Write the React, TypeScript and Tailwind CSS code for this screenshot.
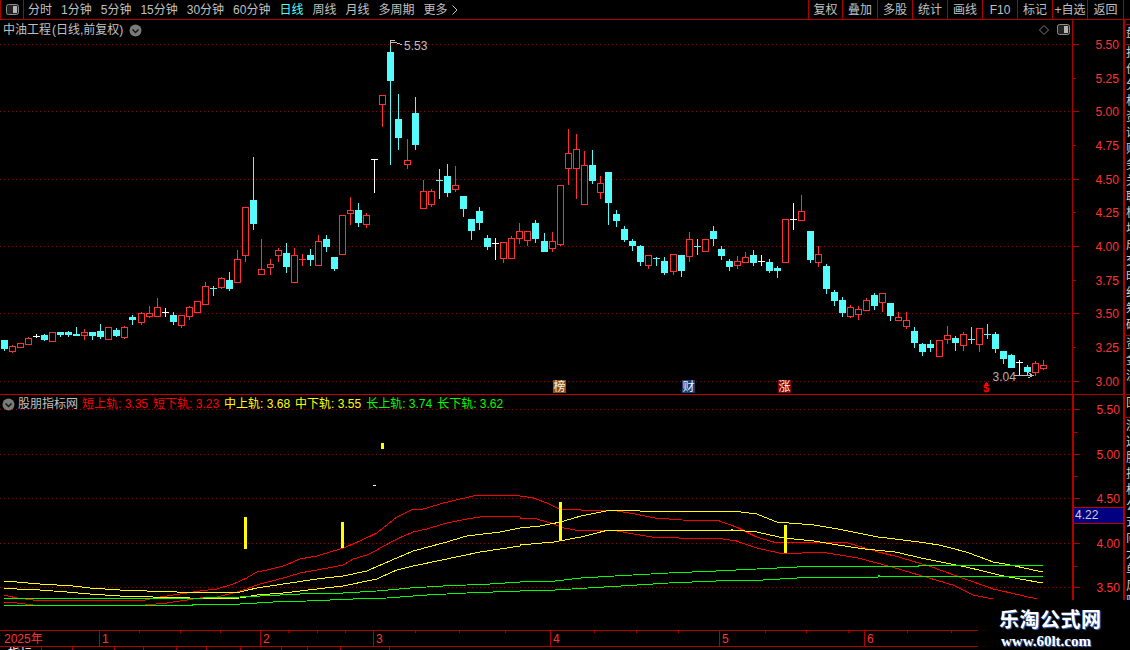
import React from "react";

// [x, high, bodyTop, bodyBottom, low, kind] read off the chart, in 3x crop units
type Row = [number, number, number, number, number, "r" | "c" | "w"];
type Bar = { x: number; hi: number; top: number; bot: number; lo: number; kind: "r" | "c" | "w" };

const CANDLE_RED = "#ff3232";
const CANDLE_CYAN = "#54fcfc";
const GRID_RED = "#8f0000";

const toBars = (ox: number, oy: number, rows: Row[]): Bar[] =>
  rows.map(([x, hi, top, bot, lo, kind]) => ({
    x: Math.floor(ox + x / 3),
    hi: Math.round(oy + hi / 3),
    top: Math.round(oy + top / 3),
    bot: Math.round(oy + bot / 3),
    lo: Math.round(oy + lo / 3),
    kind,
  }));

const bars: Bar[] = [
  ...toBars(0, 140, [
    [13, 600, 600, 624, 630, "c"], [37, 615, 619, 632, 636, "r"], [61, 610, 610, 620, 620, "r"],
    [85, 592, 595, 613, 613, "r"], [109, 582, 588, 588, 590, "w"], [133, 583, 585, 597, 600, "c"],
    [157, 577, 577, 602, 602, "r"], [181, 576, 576, 582, 588, "c"], [205, 573, 576, 582, 588, "c"],
    [229, 560, 582, 584, 585, "c"], [253, 567, 577, 584, 597, "r"], [277, 576, 576, 585, 597, "c"],
    [301, 552, 573, 588, 594, "c"], [325, 562, 562, 596, 596, "r"], [349, 564, 570, 585, 588, "c"],
    [373, 558, 562, 590, 594, "r"], [397, 525, 531, 537, 552, "c"], [424, 516, 520, 545, 552, "r"],
    [448, 498, 520, 527, 531, "r"], [472, 474, 502, 527, 527, "r"], [496, 504, 516, 516, 528, "w"],
    [520, 516, 525, 543, 552, "c"], [544, 526, 526, 554, 561, "r"], [568, 498, 502, 527, 537, "r"],
    [592, 484, 484, 515, 515, "r"], [616, 426, 439, 491, 491, "r"], [640, 438, 444, 444, 465, "c"],
    [664, 411, 415, 441, 444, "r"], [688, 396, 420, 444, 450, "c"], [712, 330, 358, 425, 425, "r"],
    [736, 202, 202, 344, 363, "r"], [760, 51, 180, 249, 267, "c"], [784, 297, 388, 401, 401, "r"],
    [811, 357, 373, 380, 402, "r"], [835, 325, 331, 344, 363, "r"],
  ]),
  ...toBars(280, 30, [
    [19, 639, 669, 708, 726, "c"], [43, 654, 676, 755, 755, "r"], [67, 672, 687, 687, 705, "r"],
    [91, 657, 675, 687, 705, "c"], [115, 615, 634, 704, 704, "r"], [139, 615, 627, 648, 663, "c"],
    [163, 681, 681, 714, 720, "c"], [187, 556, 556, 671, 671, "r"], [211, 501, 541, 548, 582, "r"],
    [235, 519, 540, 576, 588, "c"], [259, 549, 556, 581, 591, "r"], [283, 388, 388, 388, 486, "w"],
    [307, 196, 196, 221, 288, "r"], [331, 36, 66, 150, 402, "c"], [355, 192, 267, 321, 357, "c"],
    [382, 327, 391, 401, 414, "r"], [406, 201, 249, 342, 357, "c"], [430, 450, 484, 533, 533, "r"],
    [454, 477, 484, 521, 528, "r"], [478, 417, 451, 451, 504, "c"], [502, 402, 438, 486, 498, "c"],
    [526, 408, 466, 476, 483, "r"], [550, 498, 498, 534, 558, "c"], [574, 567, 567, 600, 627, "c"],
    [598, 531, 543, 576, 597, "c"], [622, 615, 624, 648, 657, "c"], [646, 624, 640, 640, 687, "w"],
    [670, 637, 637, 683, 696, "r"], [694, 618, 625, 683, 683, "r"], [718, 579, 604, 623, 639, "r"],
    [742, 604, 604, 629, 645, "r"], [766, 570, 579, 624, 636, "c"], [793, 609, 633, 663, 663, "c"],
    [817, 606, 634, 653, 663, "r"],
  ]),
  ...toBars(540, 120, [
    [61, 196, 196, 371, 375, "r"], [85, 27, 100, 143, 192, "r"], [109, 42, 88, 143, 234, "r"],
    [133, 93, 136, 251, 251, "r"], [157, 90, 135, 180, 189, "c"], [181, 168, 190, 215, 234, "r"],
    [205, 156, 156, 246, 312, "c"], [229, 270, 282, 300, 318, "c"], [253, 318, 327, 357, 363, "c"],
    [277, 357, 363, 375, 390, "c"], [301, 375, 378, 423, 435, "c"], [325, 406, 406, 434, 444, "r"],
    [349, 411, 414, 414, 435, "c"], [373, 411, 423, 456, 462, "c"], [400, 403, 403, 452, 462, "r"],
    [424, 405, 405, 450, 468, "c"], [448, 336, 358, 407, 423, "r"], [472, 357, 379, 379, 402, "c"],
    [496, 358, 358, 392, 392, "r"], [520, 318, 333, 354, 375, "c"], [544, 378, 387, 405, 417, "c"],
    [568, 417, 423, 438, 450, "c"], [592, 408, 424, 434, 444, "r"], [616, 396, 412, 425, 425, "r"],
    [640, 390, 405, 426, 435, "c"], [664, 405, 423, 423, 435, "w"], [688, 417, 426, 450, 456, "c"],
    [712, 438, 445, 450, 471, "c"], [736, 298, 298, 425, 425, "r"], [760, 249, 298, 298, 327, "w"],
    [784, 225, 274, 299, 299, "r"], [811, 333, 333, 417, 426, "c"], [835, 378, 403, 425, 438, "r"],
  ]),
  ...toBars(770, 190, [
    [169, 222, 228, 294, 309, "c"], [193, 300, 306, 330, 345, "c"], [217, 321, 330, 366, 378, "c"],
    [241, 345, 352, 378, 381, "r"], [265, 348, 358, 372, 387, "r"], [289, 324, 331, 359, 359, "r"],
    [313, 309, 315, 345, 357, "c"], [337, 310, 310, 335, 363, "r"], [361, 339, 339, 375, 390, "c"],
    [385, 366, 382, 389, 389, "r"], [409, 366, 391, 407, 414, "r"], [433, 411, 423, 456, 471, "c"],
    [457, 459, 462, 483, 495, "c"], [481, 450, 462, 471, 483, "c"], [508, 451, 451, 497, 497, "r"],
    [532, 408, 436, 446, 459, "r"], [556, 438, 444, 456, 480, "c"], [580, 426, 433, 464, 480, "r"],
    [604, 411, 447, 447, 459, "c"], [628, 415, 415, 461, 483, "r"], [652, 402, 433, 433, 444, "c"],
    [676, 426, 432, 474, 486, "c"], [700, 483, 483, 504, 519, "c"], [724, 492, 495, 531, 531, "c"],
    [748, 510, 516, 516, 552, "w"], [772, 525, 531, 543, 552, "c"], [796, 513, 520, 545, 555, "r"],
    [820, 510, 526, 533, 537, "r"],
  ]),
];

// band lines: left half from a crop at 3x from x=0, right half from a crop from x=520
const band = (left: number[][], right: number[][]) =>
  [
    ...left.map(([x, y]) => [x / 3, 490 + y / 3]),
    ...right.map(([x, y]) => [520 + x / 2.958, 490 + y / 3]),
  ]
    .map(([x, y]) => `${x.toFixed(1)},${Math.round(y)}`)
    .join(" ");

const lines = [
  {
    color: "#ff0000",
    points: band(
      [[12, 316], [50, 323], [100, 331], [410, 331], [435, 329], [480, 320], [540, 313], [600, 303], [650, 296], [700, 282], [740, 265], [770, 245], [800, 239], [850, 228], [900, 207], [950, 198], [1000, 184], [1030, 175], [1080, 153], [1130, 130], [1190, 80], [1240, 56], [1270, 58], [1330, 40], [1420, 17], [1540, 15]],
      [[0, 19], [40, 23], [80, 38], [120, 60], [160, 58], [200, 62], [270, 60], [340, 73], [400, 85], [480, 90], [590, 93], [640, 110], [700, 140], [760, 160], [820, 155], [900, 155], [970, 160], [1060, 185], [1120, 200], [1210, 228], [1300, 260], [1400, 298], [1530, 328]]
    ),
  },
  {
    color: "#ff0000",
    points: band(
      [[12, 335], [50, 340], [100, 344], [360, 346], [370, 349], [435, 344], [500, 338], [600, 325], [650, 320], [700, 308], [740, 298], [770, 285], [850, 265], [900, 250], [1000, 232], [1030, 225], [1060, 208], [1100, 195], [1130, 180], [1190, 148], [1240, 125], [1280, 118], [1340, 100], [1400, 87], [1460, 79], [1560, 82]],
      [[0, 84], [50, 86], [100, 102], [130, 113], [180, 122], [270, 120], [320, 130], [390, 140], [470, 145], [580, 145], [640, 153], [700, 175], [780, 192], [890, 187], [1000, 205], [1100, 232], [1190, 258], [1280, 285], [1340, 315], [1400, 327]]
    ),
  },
  {
    color: "#ffff00",
    points: band(
      [[12, 274], [50, 277], [120, 283], [220, 288], [270, 295], [360, 301], [440, 304], [530, 307], [650, 307], [720, 305], [770, 293], [850, 283], [950, 268], [1030, 258], [1100, 242], [1190, 203], [1240, 182], [1340, 155], [1400, 138], [1500, 125], [1560, 115]],
      [[0, 115], [60, 108], [120, 95], [180, 78], [270, 60], [340, 60], [355, 64], [630, 64], [700, 72], [760, 95], [870, 105], [940, 118], [1060, 140], [1180, 155], [1240, 165], [1320, 185], [1400, 215], [1450, 225], [1546, 245]]
    ),
  },
  {
    color: "#ffff00",
    points: band(
      [[12, 295], [50, 298], [120, 301], [200, 307], [270, 313], [360, 319], [460, 322], [530, 322], [610, 328], [720, 323], [770, 314], [850, 308], [950, 298], [1030, 289], [1130, 268], [1190, 240], [1240, 228], [1340, 207], [1440, 185], [1560, 167]],
      [[0, 166], [100, 155], [180, 140], [250, 123], [630, 121], [700, 127], [780, 145], [870, 152], [940, 165], [1020, 177], [1110, 185], [1200, 207], [1320, 230], [1430, 258], [1546, 280]]
    ),
  },
  {
    color: "#00ff00",
    points: band(
      [[12, 325], [610, 325], [720, 320], [900, 313], [1030, 308], [1130, 302], [1230, 293], [1330, 288], [1470, 282], [1560, 277]],
      [[0, 277], [105, 274], [180, 265], [280, 257], [440, 250], [580, 244], [700, 238], [820, 232], [900, 229], [1180, 229], [1180, 226], [1546, 226]]
    ),
  },
  {
    color: "#00ff00",
    points: band(
      [[12, 346], [578, 346], [580, 343], [720, 342], [820, 337], [920, 334], [1060, 328], [1160, 323], [1280, 316], [1400, 310], [1560, 304]],
      [[0, 304], [105, 300], [200, 293], [300, 287], [440, 280], [580, 274], [720, 271], [820, 265], [1060, 262], [1060, 259], [1546, 261]]
    ),
  },
];

const leftMenu = [
  { label: "分时" },
  { label: "1分钟" },
  { label: "5分钟" },
  { label: "15分钟" },
  { label: "30分钟" },
  { label: "60分钟" },
  { label: "日线", active: true },
  { label: "周线" },
  { label: "月线" },
  { label: "多周期" },
  { label: "更多" },
];

const rightMenu = ["复权", "叠加", "多股", "统计", "画线", "F10", "标记", "+自选"];

const legend = [
  { label: "短上轨: 3.35", color: "text-[#ff0000]" },
  { label: "短下轨: 3.23", color: "text-[#ff0000]" },
  { label: "中上轨: 3.68", color: "text-[#ffff00]" },
  { label: "中下轨: 3.55", color: "text-[#ffff00]" },
  { label: "长上轨: 3.74", color: "text-[#00ff00]" },
  { label: "长下轨: 3.62", color: "text-[#00ff00]" },
];

const months = [
  { label: "2025年", width: "w-[99px]", first: true },
  { label: "1", width: "w-[161px]" },
  { label: "2", width: "w-[113px]" },
  { label: "3", width: "w-[177px]" },
  { label: "4", width: "w-[169px]" },
  { label: "5", width: "w-[145px]" },
  { label: "6", width: "flex-1" },
];

const monthTicks = [139, 180, 220, 288, 317, 345, 415, 459, 505, 594, 636, 678, 765, 806, 848, 907, 951];

const PanelIcon = () => (
  <svg width="13" height="11" viewBox="0 0 13 11" className="block">
    <rect x="0.5" y="0.5" width="12" height="10" rx="2" fill="#222" stroke="#8c8c8c" />
    <rect x="7" y="2" width="4" height="7" fill="#b4b4b4" />
  </svg>
);

const ChevronBadge = () => (
  <svg width="13" height="13" viewBox="0 0 13 13" className="block shrink-0">
    <circle cx="6.5" cy="6.5" r="6" fill="#7a7a7a" />
    <path d="M3.5 5.5 L6.5 8.5 L9.5 5.5" fill="none" stroke="#141414" strokeWidth="1.5" />
  </svg>
);

const Candle = ({ bar }: { bar: Bar }) => {
  const cx = bar.x + 0.5;
  const color = bar.kind === "r" ? CANDLE_RED : bar.kind === "c" ? CANDLE_CYAN : "#ffffff";
  const wick = <line x1={cx} x2={cx} y1={bar.hi} y2={bar.lo + 1} stroke={color} />;
  if (bar.top === bar.bot) {
    return (
      <g>
        {wick}
        <line x1={bar.x - 3} x2={bar.x + 4} y1={bar.top + 0.5} y2={bar.top + 0.5} stroke={color} />
      </g>
    );
  }
  if (bar.kind === "r") {
    return (
      <g>
        {wick}
        <rect x={bar.x - 2.5} y={bar.top + 0.5} width={6} height={bar.bot - bar.top} fill="#000" stroke={color} />
      </g>
    );
  }
  return (
    <g>
      {wick}
      <rect x={bar.x - 3} y={bar.top} width={7} height={bar.bot - bar.top + 1} fill={color} />
    </g>
  );
};

const GridLine = ({ y }: { y: number }) => (
  <line x1="0" x2="1072" y1={y + 0.5} y2={y + 0.5} stroke={GRID_RED} strokeDasharray="1 3" />
);

const Tag = ({ x, text, bg }: { x: number; text: string; bg: string }) => (
  <g>
    <rect x={x} y="380" width="13" height="13" fill={bg} />
    <text x={x + 0.5} y="391" fontSize="12" fill="#f4f4f4">
      {text}
    </text>
  </g>
);

const PriceAxis = ({
  top,
  height,
  marks,
  minor,
}: {
  top: number;
  height: number;
  marks: [string, number][];
  minor: number[];
}) => (
  <svg width="50" height={height} viewBox={`0 ${top} 50 ${height}`} className="block" shapeRendering="crispEdges">
    {marks.map(([label, y]) => (
      <g key={label}>
        {/* quarter marks get the short tick */}
        <line x1="0" x2={/[27]5$/.test(label) ? 3 : 6} y1={y + 0.5} y2={y + 0.5} stroke="#b00000" />
        <text x="22.5" y={y + 5} fontSize="12" fill={CANDLE_RED} shapeRendering="auto">
          {label}
        </text>
      </g>
    ))}
    {minor.map((y) => (
      <line key={y} x1="0" x2="3" y1={y + 0.5} y2={y + 0.5} stroke="#b00000" />
    ))}
  </svg>
);

// the side panel is almost entirely off the page, only the left of each character shows
const sideStrip = [
  { h: "h-[5px]", chars: "" },
  { h: "h-[20px]", chars: "盘" },
  { h: "h-[291px]", chars: "报价分析资讯财务关联板块成交明细筹码" },
  { h: "h-[59px]", chars: "资金流" },
  { h: "h-[23px]", chars: "回", box: true },
  { h: "flex-1", chars: "测选股指标公式向大单风险提" },
];

export default function App() {
  return (
    <div className="flex h-[650px] w-[1130px] flex-col overflow-hidden bg-black text-[12px] leading-[14px] text-[#c0c0c0] [font-family:'Liberation_Sans','Noto_Sans_CJK_SC',sans-serif]">
      {/* top menu */}
      <div className="flex h-[20px] shrink-0 items-center border-b border-[#b00000]">
        <div className="flex h-full w-[24px] items-center justify-center border-x border-[#b00000]">
          <PanelIcon />
        </div>
        <div className="flex items-center gap-[9px] pl-[4px]">
          {leftMenu.map((item) => (
            <span key={item.label} className={item.active ? "text-[#54fcfc]" : ""}>
              {item.label}
            </span>
          ))}
          <svg width="6" height="10" viewBox="0 0 6 10" className="-ml-[5px] block">
            <path d="M0.5 0.5 L5 5 L0.5 9.5" fill="none" stroke="#c0c0c0" />
          </svg>
        </div>
        <div className="ml-auto flex h-full">
          {rightMenu.map((item, i) => (
            <div
              key={item}
              className={`flex h-full items-center justify-center border-l border-[#b00000] ${i === 0 ? "w-[34px]" : "w-[35px]"}`}
            >
              {item}
            </div>
          ))}
          <div className="flex h-full w-[37px] items-center justify-center border-x border-[#b00000]">返回</div>
          <div className="w-[6px]" />
        </div>
      </div>

      <div className="flex min-h-0 flex-1">
        <div className="flex w-[1072px] shrink-0 flex-col">
          {/* candles */}
          <div className="relative h-[375px] shrink-0 border-b border-[#c00000]">
            <svg width="1072" height="374" viewBox="0 20 1072 374" className="absolute inset-0 block" shapeRendering="crispEdges">
              {[44, 111, 179, 246, 313, 381].map((y) => (
                <GridLine key={y} y={y} />
              ))}
              {bars.map((bar, i) => (
                <Candle key={i} bar={bar} />
              ))}
              <path d="M390.5 46 V40.5 H395 M391 42.5 H395 L402 44.5" fill="none" stroke="#c0c0c0" />
              <text x="404" y="50" fontSize="12" fill="#c0c0c0" shapeRendering="auto">5.53</text>
              <text x="992.5" y="381" fontSize="12" fill="#b0b0b0" shapeRendering="auto">3.04</text>
              <path d="M1014 375.5 H1033 M1028 372.5 L1033 375.5 L1028 378" fill="none" stroke="#b8b8b8" />
              <Tag x={553} text="榜" bg="#8a4f12" />
              <Tag x={682} text="财" bg="#16407e" />
              <Tag x={778} text="涨" bg="#860000" />
              <path d="M986.5 381.5 L989 385.5 H984 Z" fill="#ff0000" />
              <text x="983" y="392" fontSize="11" fontWeight="700" fill="#ff0000" shapeRendering="auto">$</text>
            </svg>
            <div className="relative flex h-[20px] items-center gap-[6px] pl-[3px]">
              <span>
                中油工程<span className="ml-[1px]">(日线,前复权)</span>
              </span>
              <ChevronBadge />
            </div>
            <svg width="10" height="10" viewBox="0 0 10 10" className="absolute left-[1039px] top-[5px]">
              <path d="M5 0.5 L9.5 5 L5 9.5 L0.5 5 Z" fill="none" stroke="#7a7a7a" />
            </svg>
            <div className="absolute left-[1057px] top-[4px]">
              <PanelIcon />
            </div>
          </div>

          {/* band indicator */}
          <div className="relative min-h-0 flex-1">
            <svg width="1072" height="235" viewBox="0 395 1072 235" className="absolute inset-0 block" shapeRendering="crispEdges">
              {[409, 454, 498, 543, 587].map((y) => (
                <GridLine key={y} y={y} />
              ))}
              {lines.map((l, i) => (
                <polyline key={i} points={l.points} fill="none" stroke={l.color} />
              ))}
              <rect x="244" y="517" width="3" height="32" fill="#ffff00" />
              <rect x="341" y="522" width="3" height="26" fill="#ffff00" />
              <rect x="559" y="502" width="3" height="39" fill="#ffff00" />
              <rect x="784" y="525" width="3" height="28" fill="#ffff00" />
              <rect x="381" y="443" width="3" height="6" fill="#ffff00" />
              <rect x="373" y="485" width="3" height="1" fill="#ffffff" />
            </svg>
            <div className="relative flex items-center pl-[2px] pt-[2px]">
              <ChevronBadge />
              <span className="ml-[3px] mr-[4px]">股朋指标网</span>
              <div className="flex gap-[5px]">
                {legend.map((item) => (
                  <span key={item.label} className={item.color}>
                    {item.label}
                  </span>
                ))}
              </div>
            </div>
          </div>
        </div>

        {/* price scale */}
        <div className="flex w-[51px] shrink-0 flex-col">
          <div className="h-[375px] shrink-0 border-b border-l border-[#b00000]">
            <PriceAxis
              top={20}
              height={374}
              marks={[["5.50", 44], ["5.25", 78], ["5.00", 111], ["4.75", 145], ["4.50", 179], ["4.25", 212], ["4.00", 246], ["3.75", 280], ["3.50", 313], ["3.25", 347], ["3.00", 381]]}
              minor={[]}
            />
          </div>
          <div className="relative min-h-0 flex-1 border-l-2 border-[#b00000]">
            <PriceAxis
              top={395}
              height={235}
              marks={[["5.50", 409], ["5.00", 454], ["4.50", 498], ["4.00", 543], ["3.50", 587]]}
              minor={[432, 476, 521, 566]}
            />
            <div className="absolute left-0 right-0 top-[112px] h-[17px] border-y border-[#c00000] bg-[#000080] pl-[1px] text-[#d0d0d0]">
              4.22
            </div>
          </div>
        </div>

        {/* cut-off side panel */}
        <div className="flex w-[7px] shrink-0 flex-col overflow-hidden border-l-2 border-[#b00000] pl-[1px]">
          {sideStrip.map((part, i) => (
            <div key={i} className={`${part.h} shrink-0 overflow-hidden border-b border-[#b00000] ${part.box ? "text-[#d8d060]" : "text-[#d0d0d0]"}`}>
              {part.chars.split("").map((c, j) => (
                <div key={j} className="w-[12px] leading-[16px]">{c}</div>
              ))}
            </div>
          ))}
        </div>
      </div>

      {/* time axis */}
      <div className="relative flex h-[17px] shrink-0 border-y border-[#b00000] text-[#ff3232]">
        {months.map((m) => (
          <div key={m.label} className={`${m.width} ${m.first ? "pl-[4px]" : "border-l border-[#b00000] pl-[2px]"} shrink-0 leading-[16px]`}>
            {m.label}
          </div>
        ))}
        <svg width="1130" height="3" className="absolute left-0 top-0 block" shapeRendering="crispEdges">
          {monthTicks.map((x) => (
            <line key={x} x1={x + 0.5} x2={x + 0.5} y1="0" y2="2" stroke="#b00000" />
          ))}
        </svg>
      </div>

      {/* sheet tabs, clipped by the window */}
      <div className="flex h-[3px] shrink-0 overflow-hidden">
        {[42, 31, 42, 29, 33, 30, 34, 41, 26, 33, 49].map((w, i) => (
          <div key={i} style={{ width: w }} className="h-full border-r border-[#b00000] pl-[8px] leading-[14px] text-white">
            {i === 0 ? "指标" : ""}
          </div>
        ))}
      </div>

      {/* site watermark */}
      <div className="absolute left-[978px] top-[600px] flex h-[50px] w-[152px] flex-col items-start bg-black pl-[21px] pt-[8px] font-bold text-white [text-shadow:1px_1px_1px_#3f6fc0]">
        <span className="text-[20px] leading-[24px] tracking-[0.5px]">乐淘公式网</span>
        <span className="ml-[2px] mt-[1px] text-[15px] leading-[16px] [font-family:'Liberation_Serif',serif]">www.60lt.com</span>
      </div>
    </div>
  );
}
